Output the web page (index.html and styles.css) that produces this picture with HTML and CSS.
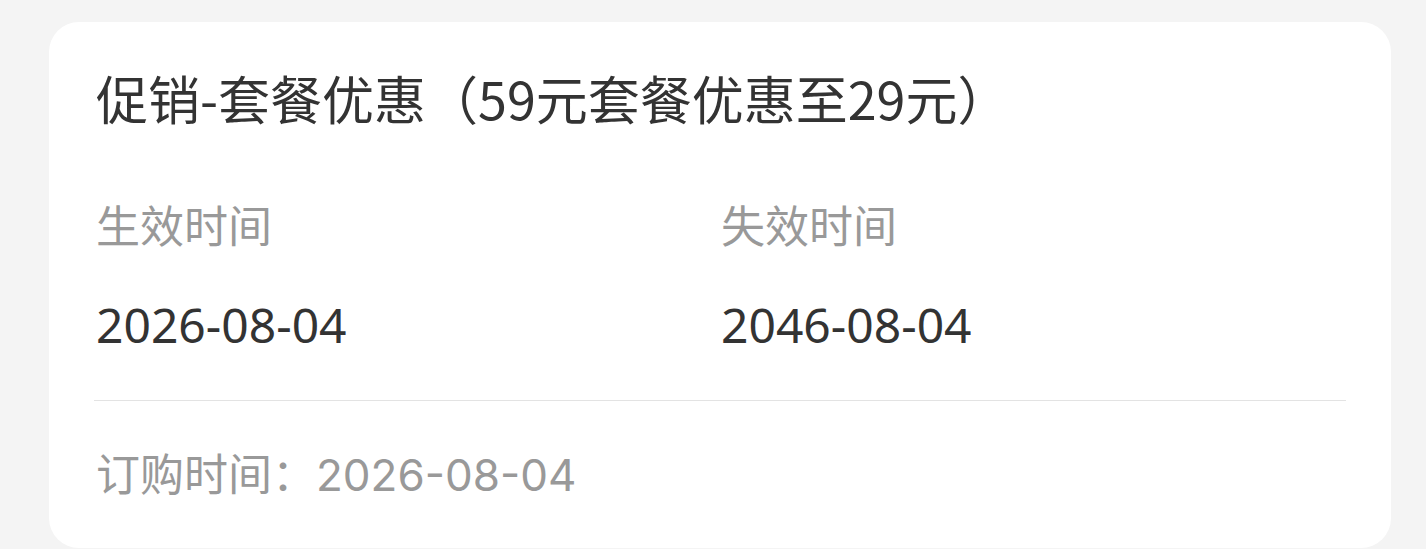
FILE: index.html
```html
<!DOCTYPE html>
<html lang="zh-CN">
<head>
<meta charset="utf-8">
<link rel="stylesheet" href="styles.css">
</head>
<body>
<div class="card">
  <div class="title">促销-套餐优惠（59元套餐优惠至29元）</div>
  <div class="cols">
    <div class="col">
      <div class="label">生效时间</div>
      <div class="value">2026-08-04</div>
    </div>
    <div class="col">
      <div class="label">失效时间</div>
      <div class="value">2046-08-04</div>
    </div>
  </div>
  <div class="divider"></div>
  <div class="order">订购时间：2026-08-04</div>
</div>
</body>
</html>
```
FILE: styles.css
```css
html, body {
  margin: 0;
  padding: 0;
  background: #f4f4f4;
  font-family: Inter, "Noto Sans CJK SC", sans-serif;
}
body {
  padding: 22px 35px 0 49px;
  height: 549px;
  box-sizing: border-box;
  overflow: hidden;
}
.card {
  background: #fff;
  border-radius: 30px;
  width: 1342px;
  height: 526px;
  box-sizing: border-box;
  padding: 45px 45px 0 47px;
}
.title {
  font-family: "Noto Sans CJK SC", sans-serif;
  font-size: 52px;
  line-height: 62px;
  color: #333;
  white-space: nowrap;
}
.cols {
  display: grid;
  grid-template-columns: 1fr 1fr;
  margin-top: 67px;
}
.label {
  font-family: "Noto Sans CJK SC", sans-serif;
  font-size: 44px;
  line-height: 56px;
  color: #999;
}
.value {
  margin-top: 43px;
  font-family: "Noto Sans", "Noto Sans CJK SC", sans-serif;
  font-size: 48px;
  line-height: 60px;
  color: #333;
}
.divider {
  margin-top: 45px;
  margin-left: -2px;
  height: 1px;
  background: #e3e3e3;
}
.order {
  margin-top: 46px;
  font-size: 44px;
  line-height: 56px;
  color: #999;
}
```
